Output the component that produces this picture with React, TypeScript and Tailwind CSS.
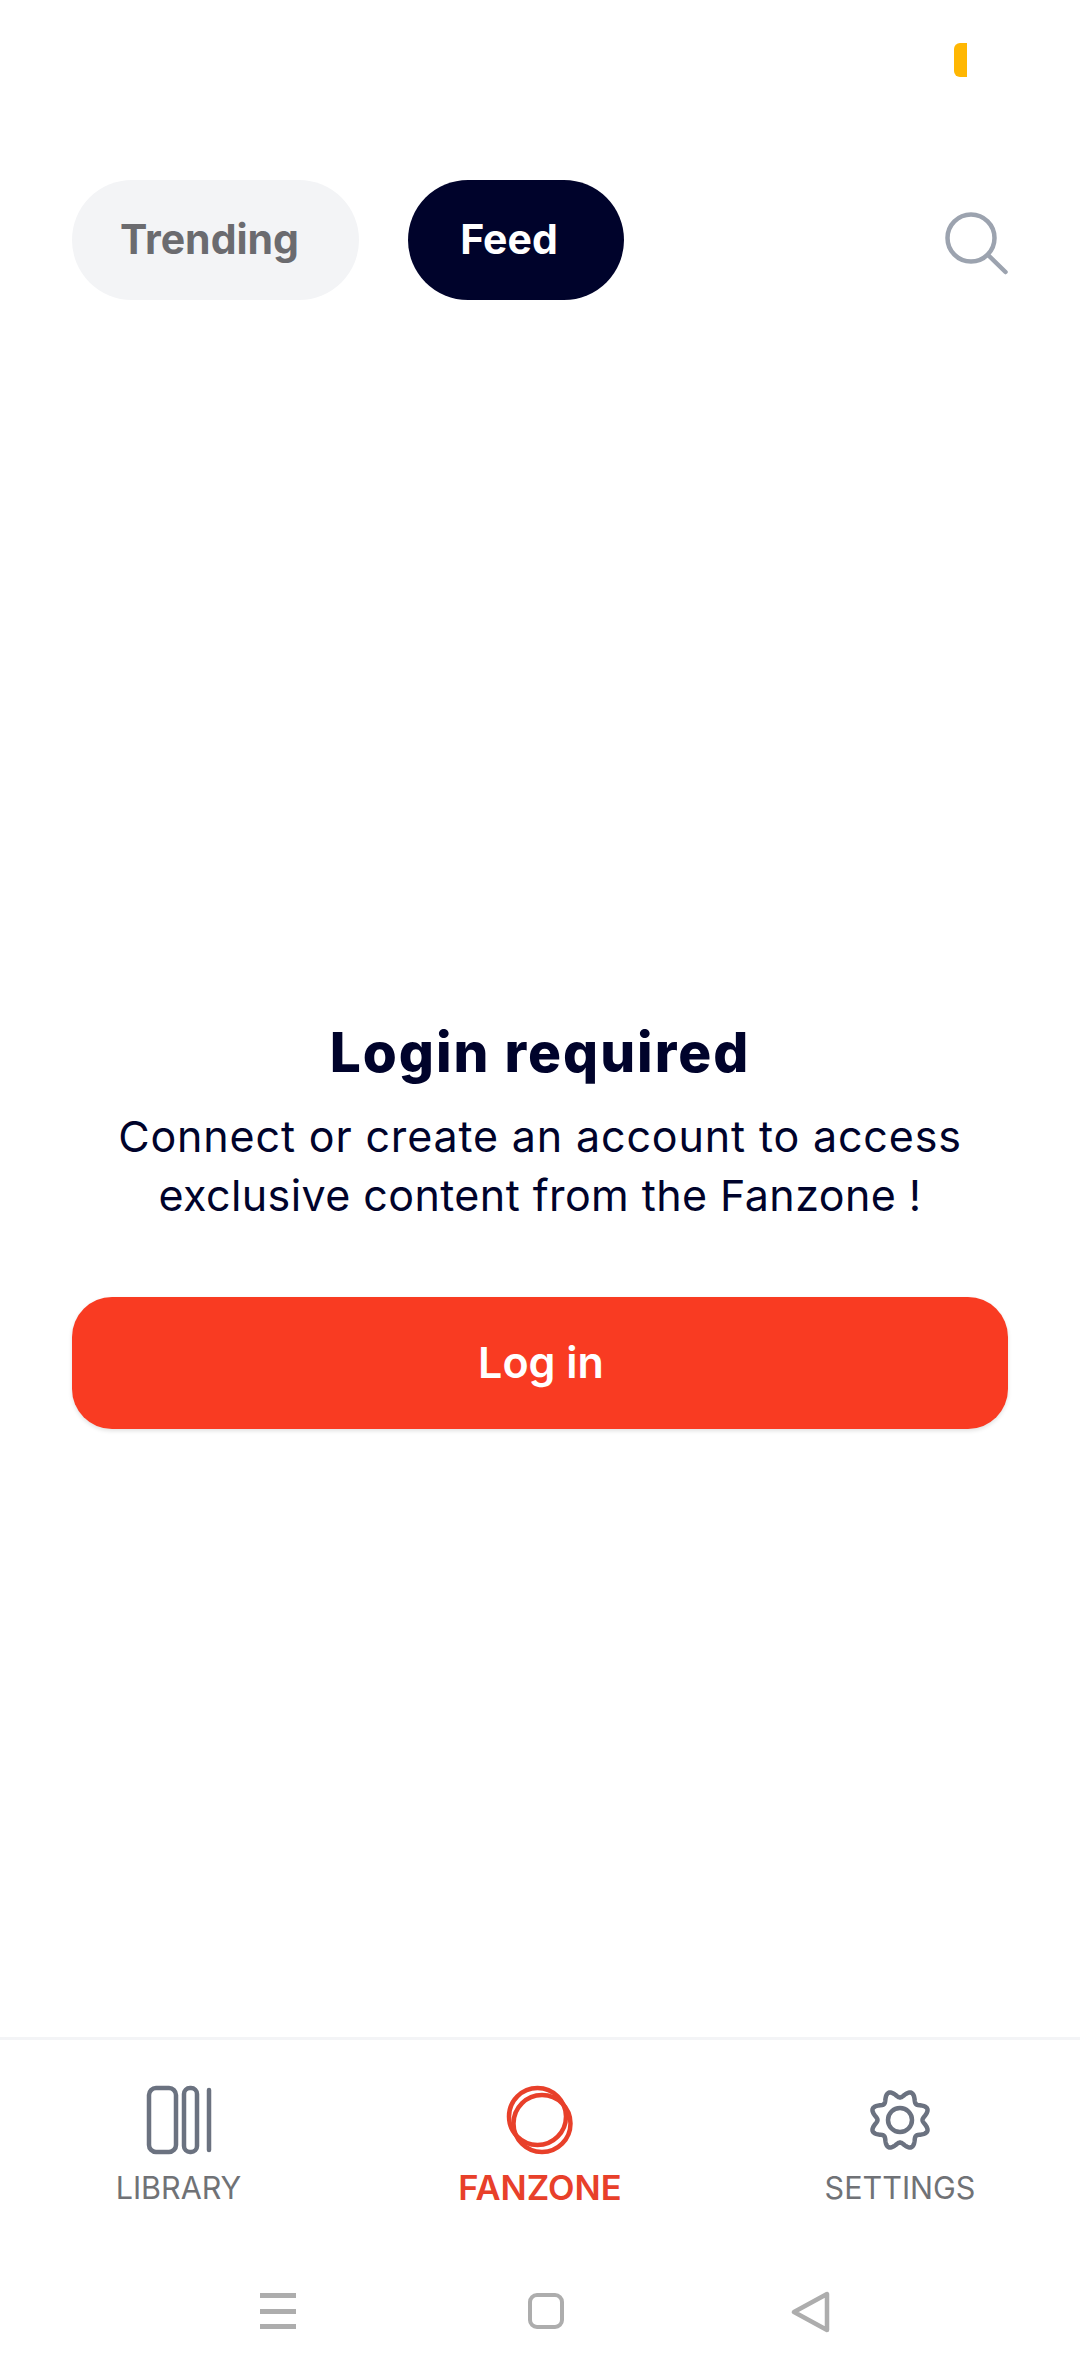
const fontBody = "font-['Inter','Liberation_Sans',sans-serif]";

function gearPath() {
  const pts: string[] = [];
  for (let i = 0; i < 240; i++) {
    const t = (i / 240) * Math.PI * 2;
    const r = 26 + 3.5 * Math.cos(8 * (t - Math.PI / 8));
    pts.push(`${(31 + r * Math.cos(t)).toFixed(2)} ${(31 + r * Math.sin(t)).toFixed(2)}`);
  }
  return `M${pts.join("L")}Z`;
}

function SearchIcon() {
  return (
    <svg width="64" height="64" viewBox="0 0 64 64" fill="none" stroke="#9ca3af" strokeWidth="4.5" strokeLinecap="round">
      <circle cx="26" cy="26" r="23.5" />
      <path d="M43 43L60.5 60" />
    </svg>
  );
}

function LibraryIcon() {
  return (
    <svg width="66" height="70" viewBox="0 0 66 70" fill="none" stroke="#6b7280" strokeWidth="4.5" strokeLinecap="round">
      <rect x="3" y="3" width="27" height="64" rx="7" />
      <rect x="38" y="3" width="13" height="64" rx="6" />
      <path d="M63 5V65" />
    </svg>
  );
}

function FanzoneIcon() {
  return (
    <svg width="68" height="70" viewBox="0 0 68 70" fill="none" stroke="#e8402a" strokeWidth="4.5">
      <circle cx="31.5" cy="31.5" r="28.5" />
      <circle cx="36" cy="38.5" r="28.5" />
    </svg>
  );
}

function SettingsIcon() {
  return (
    <svg width="62" height="62" viewBox="0 0 62 62" fill="none" stroke="#6b7280" strokeWidth="4.5" strokeLinejoin="round">
      <path d={gearPath()} />
      <circle cx="31" cy="31" r="12" />
    </svg>
  );
}

function NavItem({ label, icon, active, className }: { label: string; icon: React.ReactNode; active?: boolean; className?: string }) {
  return (
    <div className={`flex flex-col items-center ${className ?? ""}`}>
      <div className="flex h-[70px] items-center justify-center">{icon}</div>
      <span
        className={
          active
            ? "mt-[14px] text-[34.5px] leading-[38px] font-semibold text-[#e8402a]"
            : "mt-[14px] text-[30.5px] leading-[38px] font-normal text-[#707276]"
        }
      >
        {label}
      </span>
    </div>
  );
}

export default function App() {
  return (
    <div className={`flex h-[2376px] w-[1080px] flex-col bg-white ${fontBody}`}>
      <div className="flex h-[180px] shrink-0 justify-end pt-[43px] pr-[113px]">
        <div className="h-[34px] w-[13px] rounded-l-[6px] bg-[#ffb703]" />
      </div>

      <div className="flex h-[120px] shrink-0 items-center justify-between pr-[71px] pl-[72px]">
        <div className="flex gap-[49px]">
          <div className="flex h-[120px] w-[287px] items-center justify-center rounded-full bg-[#f3f4f6] pr-[12px] text-[41px] font-bold text-[#6b6b6f]">
            Trending
          </div>
          <div className="flex h-[120px] w-[216px] items-center justify-center rounded-full bg-[#00032b] pr-[14px] text-[41px] font-bold text-white">
            Feed
          </div>
        </div>
        <div className="mt-[8px]">
          <SearchIcon />
        </div>
      </div>

      <main className="flex flex-1 flex-col px-[72px] pt-[721px]">
        <h1 className="text-center text-[55px] leading-[62px] font-extrabold tracking-[2px] text-[#00032b]">Login required</h1>
        <p className="mt-[24px] text-center text-[43px] leading-[59px] text-[#00032b]">
          <span className="block tracking-[0.85px]">Connect or create an account to access</span>
          <span className="block tracking-[0.42px]">exclusive content from the Fanzone !</span>
        </p>
        <button className="mt-[72px] flex h-[132px] items-center justify-center rounded-[40px] bg-[#f93b22] pb-[2px] pl-[2px] text-[43px] font-semibold text-white shadow-[0_2px_4px_rgba(0,0,0,0.12)]">
          Log in
        </button>
      </main>

      <nav className="grid h-[196px] shrink-0 grid-cols-3 border-t-[3px] border-[#f3f4f6] pt-[45px]">
        <NavItem label="LIBRARY" icon={<LibraryIcon />} className="pr-[3px]" />
        <NavItem label="FANZONE" icon={<FanzoneIcon />} active />
        <NavItem label="SETTINGS" icon={<SettingsIcon />} />
      </nav>

      <div className="flex h-[143px] shrink-0 items-start pt-[60px]">
        <div className="ml-[260px] flex h-[36px] w-[36px] flex-col justify-between">
          <div className="h-[5px] bg-[#adadad]" />
          <div className="h-[5px] bg-[#adadad]" />
          <div className="h-[5px] bg-[#adadad]" />
        </div>
        <div className="ml-[232px] h-[36px] w-[36px] rounded-[9px] border-[4px] border-[#adadad]" />
        <svg className="mt-[-2px] ml-[227px]" width="40" height="42" viewBox="0 0 40 42" fill="none" stroke="#adadad" strokeWidth="4.5" strokeLinejoin="round">
          <path d="M3 21L36 3V39Z" />
        </svg>
      </div>
    </div>
  );
}
